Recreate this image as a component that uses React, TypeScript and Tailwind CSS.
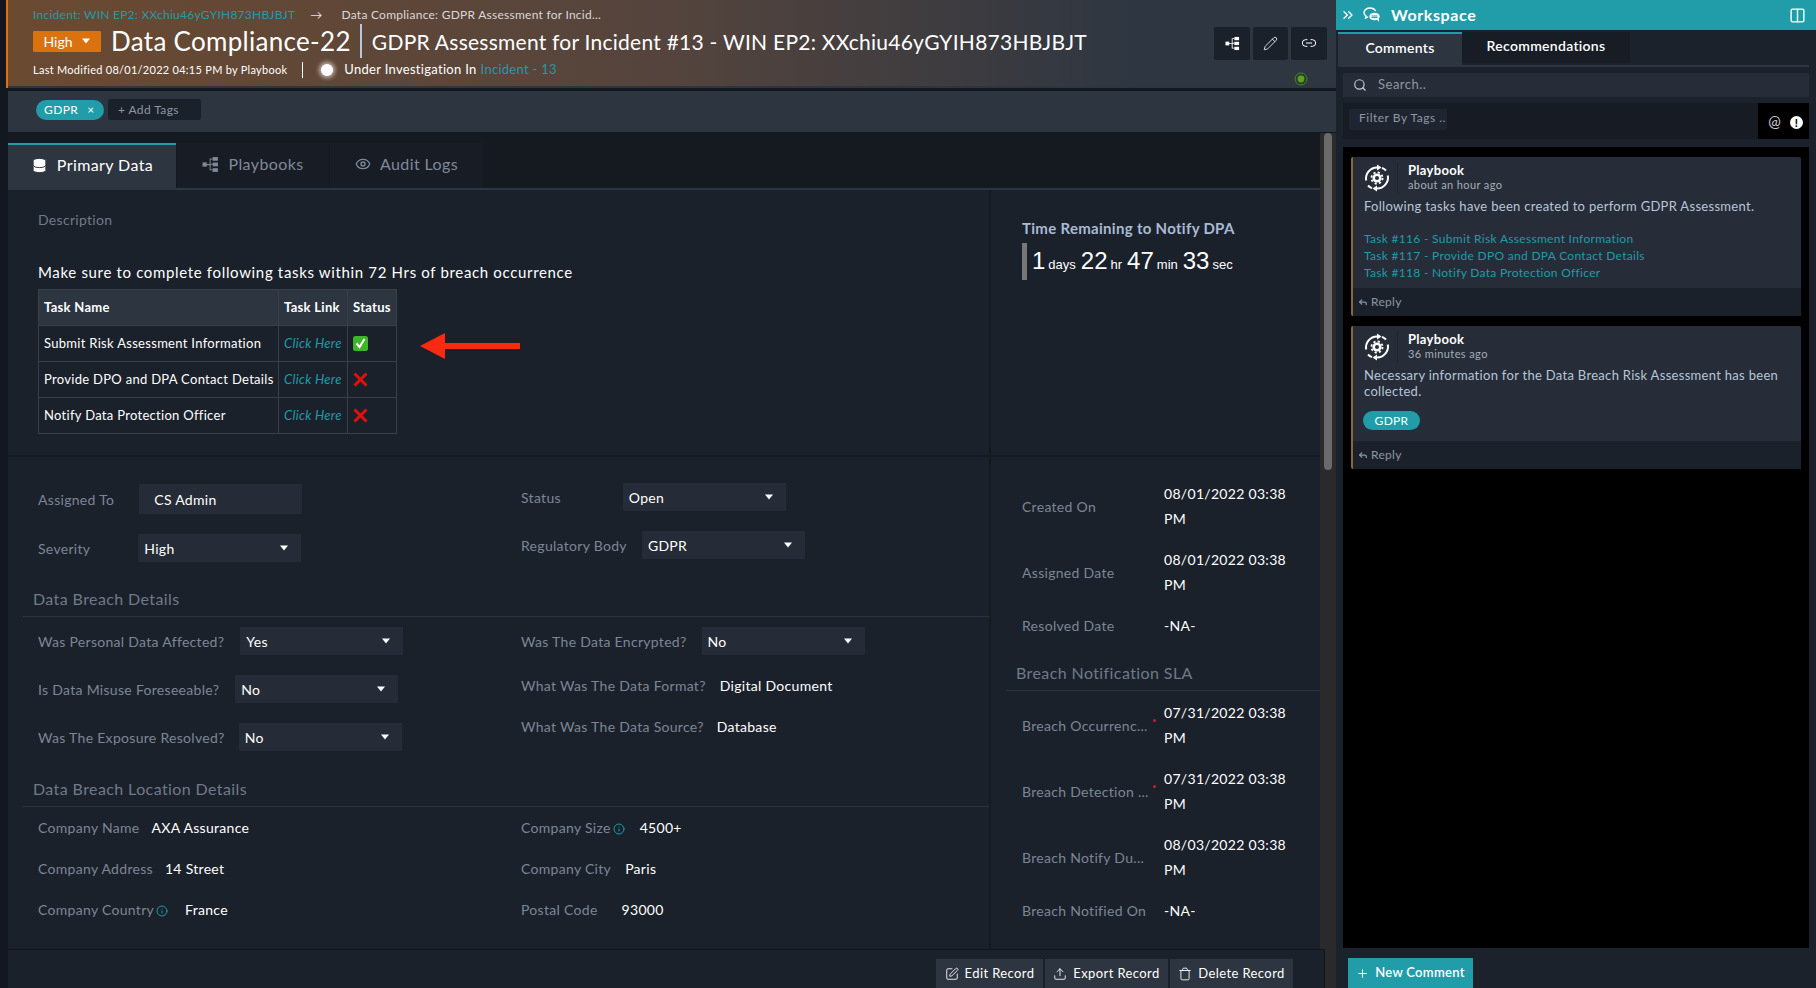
import React from 'react';
import { ChevronsRight, Columns2, Database, Eye, Info, Link2, Pencil, Plus, Reply, Search, SquarePen, Trash, Upload } from 'lucide-react';

function Caret() {
  return (
    <svg width="10" height="6" viewBox="0 0 10 6" className="shrink-0">
      <polygon points="1,0.5 9,0.5 5,5.5" fill="#ffffff" />
    </svg>
  );
}

function FlowIcon({ color = '#ffffff', size = 16 }: { color?: string; size?: number }) {
  return (
    <svg width={size} height={size} viewBox="0 0 16 16" fill={color}>
      <rect x="0.5" y="6" width="4" height="4" />
      <rect x="10" y="1" width="5" height="3.5" />
      <rect x="10" y="6.2" width="5" height="3.5" />
      <rect x="10" y="11.5" width="5" height="3.5" />
      <path d="M4 7.6h3.2V2.4H10v0.9H8.1v3.9H10v1H8.1v4.3H10v0.9H7.2V8.6H4z" />
    </svg>
  );
}

function PlaybookIcon() {
  return (
    <svg width="28" height="28" viewBox="0 0 28 28" fill="none" stroke="#ffffff" strokeWidth="2">
      <path d="M3.2 16.5a11 11 0 0 1 11-13" />
      <path d="M24.8 11.5a11 11 0 0 1-11 13" />
      <path d="M5 21.5a11 11 0 0 0 4 2.6" />
      <path d="M23 6.5a11 11 0 0 0-4-2.6" />
      <polygon points="14,0.5 18.5,3.5 14,6.5" fill="#ffffff" stroke="none" />
      <polygon points="14,21.5 9.5,24.5 14,27.5" fill="#ffffff" stroke="none" />
      <circle cx="14" cy="14" r="4.6" fill="#ffffff" stroke="none" />
      <circle cx="14" cy="14" r="5.6" strokeWidth="1.8" strokeDasharray="2.2 2.2" />
      <circle cx="14" cy="14" r="2" fill="#262d38" stroke="none" />
    </svg>
  );
}

function WorkspaceIcon() {
  return (
    <svg width="18" height="16" viewBox="0 0 18 16" fill="none" stroke="#ffffff" strokeWidth="1.4">
      <path d="M7 1C3.7 1 1 3 1 5.6c0 1.4.8 2.6 2 3.4L2.6 11l2.5-1.2" />
      <path d="M7 1c2.6 0 4.8 1.2 5.6 3" />
      <ellipse cx="11.5" cy="9.5" rx="5.2" ry="3.8" fill="#ffffff" stroke="none" />
      <path d="M8.5 9h6M8.5 10.6h6" stroke="#219ca9" strokeWidth="1" />
      <path d="M14 12.5l2 2.5v-3.5" fill="#ffffff" stroke="none" />
    </svg>
  );
}

function Select({ value, gap }: { value: string; gap: number }) {
  return (
    <div style={{ marginLeft: gap }} className="w-[163px] h-[28px] bg-[#262c37] flex items-center justify-between pl-[6px] pr-[12px] text-white">
      <span>{value}</span>
      <Caret />
    </div>
  );
}

function Label({ children }: { children: React.ReactNode }) {
  return <span className="text-[#7b8696] whitespace-nowrap">{children}</span>;
}

function FieldRow({ label, value, gap, height = 'h-[48px]' }: { label: string; value: string; gap: number; height?: string }) {
  return (
    <div className={`flex items-center ${height}`}>
      <Label>{label}</Label>
      <Select value={value} gap={gap} />
    </div>
  );
}

function TextRow({ label, value, gap, info, height }: { label: string; value: string; gap: number; info?: boolean; height: string }) {
  return (
    <div className={`flex items-center ${height}`}>
      <Label>{label}</Label>
      {info && <Info size={12} className="text-[#1f9ca8] ml-[2px] mt-[2px]" />}
      <span style={{ marginLeft: gap }} className="text-white whitespace-nowrap">{value}</span>
    </div>
  );
}

function DateRow({ label, value, required, height }: { label: string; value: string; required?: boolean; height: string }) {
  return (
    <div className={`flex items-center ${height}`}>
      <div className="w-[142px] relative">
        <Label>{label}</Label>
        {required && <span className="absolute left-[131px] top-[4px] w-[3px] h-[3px] rounded-full bg-[#d0192c]" />}
      </div>
      <span className="w-[130px] text-white leading-[25px]">{value}</span>
    </div>
  );
}

const tasks = [
  { name: 'Submit Risk Assessment Information', done: true },
  { name: 'Provide DPO and DPA Contact Details', done: false },
  { name: 'Notify Data Protection Officer', done: false },
];

function StatusMark({ done }: { done: boolean }) {
  if (done) {
    return (
      <svg width="15" height="15" viewBox="0 0 15 15">
        <rect width="15" height="15" rx="2.5" fill="#3fb62a" />
        <path d="M3.5 7.5l3 3.5 5-8" fill="none" stroke="#ffffff" strokeWidth="2" />
      </svg>
    );
  }
  return (
    <svg width="15" height="15" viewBox="0 0 15 15">
      <path d="M1.5 1.5l12 12M13.5 1.5l-12 12" stroke="#e01010" strokeWidth="3" />
    </svg>
  );
}

function TaskTable() {
  return (
    <table className="w-[358px] table-fixed border-collapse text-[13px] tracking-[0.3px] text-white">
      <colgroup>
        <col className="w-[240px]" />
        <col className="w-[69px]" />
        <col className="w-[49px]" />
      </colgroup>
      <thead>
        <tr className="h-[36px] bg-[#2d3540] font-bold">
          <th className="border border-[#3a3f47] pl-[5px] text-left font-bold">Task Name</th>
          <th className="border border-[#3a3f47] pl-[5px] text-left font-bold whitespace-nowrap">Task Link</th>
          <th className="border border-[#3a3f47] pl-[5px] text-left font-bold">Status</th>
        </tr>
      </thead>
      <tbody>
        {tasks.map((t) => (
          <tr key={t.name} className="h-[36px]">
            <td className="border border-[#3a3f47] pl-[5px] whitespace-nowrap">{t.name}</td>
            <td className="border border-[#3a3f47] pl-[5px] italic text-[#1f9ca8] whitespace-nowrap">Click Here</td>
            <td className="border border-[#3a3f47] pl-[5px]"><StatusMark done={t.done} /></td>
          </tr>
        ))}
      </tbody>
    </table>
  );
}

function Countdown() {
  const parts = [['1', 'days'], ['22', 'hr'], ['47', 'min'], ['33', 'sec']];
  return (
    <div className="mt-[5px] flex h-[37px] border-l-[5px] border-[#777777] pl-[5px] pb-[1px] items-center font-['Liberation_Sans',sans-serif] text-white tracking-normal">
      {parts.map(([n, u]) => (
        <span key={u} className="mr-[5px] flex items-baseline">
          <span className="text-[24px] leading-none">{n}</span>
          <span className="text-[13px] leading-none ml-[3px]">{u}</span>
        </span>
      ))}
    </div>
  );
}

function MainPanel() {
  return (
    <div className="h-[759px] flex overflow-hidden bg-[#1b212b] text-[14px] tracking-[0.3px]">
      <div className="w-[983px] shrink-0 border-r-[2px] border-[#151a21]">
        <div className="h-[267px] pl-[30px] pt-[22px] border-b-[2px] border-[#151a21]">
          <div className="text-[#6f7a8a] leading-[16px]">Description</div>
          <div className="mt-[34px] text-[15px] text-white leading-[20px] tracking-[0.66px] whitespace-nowrap">Make sure to complete following tasks within 72 Hrs of breach occurrence</div>
          <div className="mt-[7px] flex">
            <TaskTable />
            <svg width="100" height="26" viewBox="0 0 100 26" className="ml-[23px] mt-[44px]">
              <polygon points="0,13 25,0 25,10 100,10 100,16 25,16 25,26" fill="#f92a10" />
            </svg>
          </div>
        </div>
        <div className="flex h-[132px] pl-[30px] pt-[26px]">
          <div className="w-[483px]">
            <div className="flex items-center h-[32px]">
              <Label>Assigned To</Label>
              <div className="ml-[25px] w-[163px] h-[30px] bg-[#262c37] pl-[15px] flex items-center text-white">CS Admin</div>
            </div>
            <div className="flex items-center h-[28px] mt-[19px]">
              <Label>Severity</Label>
              <div className="ml-[48px]"><Select value="High" gap={0} /></div>
            </div>
          </div>
          <div>
            <FieldRow label="Status" value="Open" gap={62} height="h-[28px]" />
            <div className="mt-[20px]"><FieldRow label="Regulatory Body" value="GDPR" gap={15} height="h-[28px]" /></div>
          </div>
        </div>
        <div className="ml-[15px] pl-[10px] h-[28px] text-[16px] text-[#6f7a8a] tracking-[0.4px] leading-[20px] border-b border-[#2b3340]">Data Breach Details</div>
        <div className="flex h-[155px] pl-[30px]">
          <div className="w-[483px]">
            <FieldRow label="Was Personal Data Affected?" value="Yes" gap={16} />
            <FieldRow label="Is Data Misuse Foreseeable?" value="No" gap={16} />
            <FieldRow label="Was The Exposure Resolved?" value="No" gap={14} />
          </div>
          <div>
            <FieldRow label="Was The Data Encrypted?" value="No" gap={15} />
            <TextRow label="What Was The Data Format?" value="Digital Document" gap={14} height="h-[40px]" />
            <TextRow label="What Was The Data Source?" value="Database" gap={13} height="h-[42px]" />
          </div>
        </div>
        <div className="ml-[15px] mt-[7px] pl-[10px] h-[28px] text-[16px] text-[#6f7a8a] tracking-[0.4px] leading-[20px] border-b border-[#2b3340]">Data Breach Location Details</div>
        <div className="flex pl-[30px]">
          <div className="w-[483px]">
            <TextRow label="Company Name" value="AXA Assurance" gap={12} height="h-[41px]" />
            <TextRow label="Company Address" value="14 Street" gap={12} height="h-[41px]" />
            <TextRow label="Company Country" value="France" gap={17} info height="h-[41px]" />
          </div>
          <div>
            <TextRow label="Company Size" value="4500+" gap={15} info height="h-[41px]" />
            <TextRow label="Company City" value="Paris" gap={14} height="h-[41px]" />
            <TextRow label="Postal Code" value="93000" gap={24} height="h-[41px]" />
          </div>
        </div>
      </div>
      <div className="flex-1 min-w-0">
        <div className="h-[267px] pl-[31px] pt-[28px] border-b-[2px] border-[#151a21]">
          <div className="text-[15px] font-bold text-[#a9bad3] leading-[20px] whitespace-nowrap">Time Remaining to Notify DPA</div>
          <Countdown />
        </div>
        <div className="pl-[31px] pt-[16px]">
          <DateRow label="Created On" value="08/01/2022 03:38 PM" height="h-[66px]" />
          <DateRow label="Assigned Date" value="08/01/2022 03:38 PM" height="h-[66px]" />
          <DateRow label="Resolved Date" value="-NA-" height="h-[40px]" />
        </div>
        <div className="ml-[15px] mt-[18px] pl-[10px] h-[28px] text-[16px] text-[#6f7a8a] tracking-[0.4px] leading-[20px] border-b border-[#2b3340]">Breach Notification SLA</div>
        <div className="pl-[31px] pt-[1px]">
          <DateRow label="Breach Occurrenc..." value="07/31/2022 03:38 PM" required height="h-[66px]" />
          <DateRow label="Breach Detection ..." value="07/31/2022 03:38 PM" required height="h-[66px]" />
          <DateRow label="Breach Notify Du..." value="08/03/2022 03:38 PM" height="h-[66px]" />
          <DateRow label="Breach Notified On" value="-NA-" height="h-[40px]" />
        </div>
      </div>
    </div>
  );
}

function FooterButton({ icon, label, width }: { icon: React.ReactNode; label: string; width: string }) {
  return (
    <div className={`${width} h-[29px] bg-[#2d3540] text-white flex items-center justify-center gap-[6px] text-[13px] tracking-[0.4px]`}>
      {icon}
      <span>{label}</span>
    </div>
  );
}

function TabItem({ icon, label, width, active }: { icon: React.ReactNode; label: string; width: string; active?: boolean }) {
  return (
    <div className={`${width} pb-[3px] flex items-center justify-center gap-[9px] text-[16px] tracking-[0.4px] ${active ? 'bg-[#2d3540] border-t-[2px] border-[#1f9ca8] text-white' : 'bg-[#171c25] text-[#7f8998]'}`}>
      {icon}
      <span>{label}</span>
    </div>
  );
}

function Comment({ time, height, children }: { time: string; height: string; children: React.ReactNode }) {
  return (
    <div className={`${height} flex flex-col mx-[8px] border-l-[2px] border-[#8a6a2a] bg-[#262d38] rounded-[2px]`}>
      <div className="flex-1 min-h-0 px-[11px] pt-[5px]">
        <div className="flex">
          <div className="w-[35px] h-[32px] flex items-center -ml-[1px] border-r border-[#1f252f]"><PlaybookIcon /></div>
          <div className="ml-[10px]">
            <div className="text-[13px] font-bold text-white leading-[16px]">Playbook</div>
            <div className="text-[11px] text-[#a5acb8] leading-[15px] -mt-[1px] tracking-[0.4px]">{time}</div>
          </div>
        </div>
        {children}
      </div>
      <div className="h-[28px] bg-[#1b212b] flex items-center gap-[3px] pl-[5px] text-[12px] text-[#8d96a3] shrink-0">
        <Reply size={10} strokeWidth={3} />
        <span>Reply</span>
      </div>
    </div>
  );
}

function Workspace() {
  return (
    <div className="w-[480px] shrink-0 h-full flex flex-col bg-[#1c222c]">
      <div className="h-[30px] bg-[#219ca9] flex items-center text-white shrink-0">
        <ChevronsRight size={16} className="ml-[4px]" />
        <div className="ml-[7px]"><WorkspaceIcon /></div>
        <span className="ml-[10px] text-[16px] font-bold tracking-[0.6px]">Workspace</span>
        <Columns2 size={17} className="ml-auto mr-[10px]" />
      </div>
      <div className="flex h-[37px] mx-[2px] mr-[7px] border-b-[2px] border-[#2d3540] pt-[2px] text-[14px] text-white font-semibold tracking-[0.3px] shrink-0">
        <div className="w-[124px] h-[33px] pb-[4px] bg-[#2d3540] border-t-[2px] border-[#1f9ca8] flex items-center justify-center">Comments</div>
        <div className="w-[168px] h-[31px] pb-[5px] bg-[#171c25] flex items-center justify-center">Recommendations</div>
      </div>
      <div className="mx-[7px] mt-[6px] h-[24px] bg-[#262d38] flex items-center pl-[10px] text-[13px] text-[#8f97a3] tracking-[0.5px]">
        <Search size={14} className="text-[#c8ccd2]" />
        <span className="ml-[11px]">Search..</span>
      </div>
      <div className="mx-[7px] mt-[6px] h-[36px] bg-[#171c24] flex justify-between">
        <div className="mt-[6px] ml-[6px] w-[98px] h-[21px] pb-[3px] rounded-[2px] bg-[#1f2530] flex items-center pl-[10px] text-[12px] text-[#8f97a3] tracking-[0.5px]">Filter By Tags ..</div>
        <div className="w-[51px] bg-black flex items-center justify-center gap-[9px] pl-[4px] text-[#c8ccd2] text-[15px]">
          <span className="leading-none">@</span>
          <span className="w-[13px] h-[13px] mt-[2px] rounded-full bg-white flex items-center justify-center text-black text-[11px] font-black leading-none">!</span>
        </div>
      </div>
      <div className="mx-[7px] mt-[8px] h-[801px] bg-black pt-[10px] flex flex-col gap-[10px] text-[13px] tracking-[0.3px]">
        <Comment time="about an hour ago" height="h-[159px]">
          <div className="mt-[4px] text-[#b8c5d8] leading-[16px] whitespace-nowrap">Following tasks have been created to perform GDPR Assessment.</div>
          <div className="mt-[17px] text-[12px] text-[#1f9ca8] leading-[16.8px]">
            <div>Task #116 - Submit Risk Assessment Information</div>
            <div>Task #117 - Provide DPO and DPA Contact Details</div>
            <div>Task #118 - Notify Data Protection Officer</div>
          </div>
        </Comment>
        <Comment time="36 minutes ago" height="h-[143px]">
          <div className="mt-[4px] text-[#b8c5d8] leading-[16px]">Necessary information for the Data Breach Risk Assessment has been collected.</div>
          <div className="mt-[12px] -ml-[1px] w-[57px] h-[19px] rounded-full bg-[#219ca9] text-white text-[12px] flex items-center justify-center">GDPR</div>
        </Comment>
      </div>
      <div className="mt-[10px] ml-[12px] w-[125px] h-[30px] bg-[#219ca9] text-white text-[13px] font-semibold tracking-[0.3px] flex items-center justify-center gap-[6px]">
        <Plus size={13} />
        <span>New Comment</span>
      </div>
    </div>
  );
}

export default function App() {
  return (
    <div className="w-[1816px] h-[988px] flex overflow-hidden bg-[#13171f] font-['Lato',sans-serif]">
      <div className="w-[1336px] shrink-0 h-full flex flex-col">
        <div className="ml-[6px] h-[88px] shrink-0 border-l-[2px] border-[#d9720f] bg-[#2d3540]">
          <div className="h-[86px] pl-[25px] pr-[9px] bg-[linear-gradient(90deg,#6b4a31_0%,#54443d_50%,#2e3641_85%)] text-white">
            <div className="pt-[8px] flex items-center h-[22px] text-[12px] tracking-[0.25px] whitespace-nowrap">
              <span className="text-[#1f9ca8]">Incident: WIN EP2: XXchiu46yGYIH873HBJBJT</span>
              <span className="ml-[15px] text-[#e6e6e6]">→</span>
              <span className="ml-[19px] text-[#d8d8d8]">Data Compliance: GDPR Assessment for Incid...</span>
            </div>
            <div className="flex items-center h-[38px]">
              <div className="w-[68px] h-[21px] bg-[#d9720f] rounded-[1px] flex items-center justify-center gap-[8px] text-[14px]">
                <span>High</span>
                <Caret />
              </div>
              <span className="ml-[10px] text-[26px] leading-none tracking-[0.3px] whitespace-nowrap">Data Compliance-22</span>
              <span className="ml-[9px] w-[2px] h-[34px] bg-[#b8c7da]" />
              <span className="ml-[10px] text-[21px] leading-none tracking-[0.25px] whitespace-nowrap">GDPR Assessment for Incident #13 - WIN EP2: XXchiu46yGYIH873HBJBJT</span>
              <div className="ml-auto flex gap-[3px] mt-[4px]">
                <div className="w-[36px] h-[33px] bg-[#1b212b] rounded-[2px] flex items-center justify-center"><FlowIcon size={15} /></div>
                <div className="w-[35px] h-[33px] bg-[#1b212b] rounded-[2px] flex items-center justify-center"><Pencil size={15} strokeWidth={1.3} /></div>
                <div className="w-[36px] h-[33px] bg-[#1b212b] rounded-[2px] flex items-center justify-center"><Link2 size={16} strokeWidth={1.5} /></div>
              </div>
            </div>
            <div className="flex items-center h-[20px] text-[11px] tracking-[0.27px] whitespace-nowrap">
              <span>Last Modified 08/01/2022 04:15 PM by Playbook</span>
              <span className="ml-[15px] w-[1px] h-[16px] bg-white" />
              <span className="ml-[18px] w-[12px] h-[12px] rounded-full bg-white shadow-[0_0_4px_2px_rgba(255,255,255,0.6)]" />
              <span className="ml-[11px] text-[13px] tracking-[0.3px]">Under Investigation In</span>
              <span className="ml-[4px] text-[13px] text-[#1f9ca8]">Incident - 13</span>
              <svg width="14" height="14" viewBox="0 0 14 14" className="ml-auto mr-[19px] relative top-[9px]">
                <circle cx="7" cy="7" r="6" fill="none" stroke="#3f8a12" strokeWidth="1" />
                <circle cx="7" cy="7" r="3.4" fill="#54a80e" />
              </svg>
            </div>
          </div>
        </div>
        <div className="h-[3px] shrink-0" />
        <div className="ml-[8px] h-[41px] shrink-0 bg-[#2d3540] flex items-center pl-[28px] pb-[4px] text-[12px]">
          <div className="w-[68px] h-[20px] rounded-full bg-[#219ca9] text-white flex items-center pl-[8px] tracking-[0.4px]">
            <span>GDPR</span>
            <span className="ml-[9px] text-[12px]">×</span>
          </div>
          <div className="ml-[4px] w-[93px] h-[21px] bg-[#1b212b] rounded-[2px] flex items-center pl-[10px] text-[#8f97a3] tracking-[0.4px]">+ Add Tags</div>
        </div>
        <div className="flex-1 min-h-0 flex ml-[8px] mt-[1px]">
          <div className="w-[1312px] shrink-0 flex flex-col">
            <div className="h-[57px] shrink-0 bg-[#151a21] border-b-[2px] border-[#2d3540] pt-[10px] flex gap-[1px]">
              <TabItem active width="w-[168px]" label="Primary Data" icon={<Database size={17} fill="currentColor" stroke="#2d3540" strokeWidth={1.4} />} />
              <TabItem width="w-[152px]" label="Playbooks" icon={<FlowIcon size={17} color="#7f8998" />} />
              <TabItem width="w-[153px]" label="Audit Logs" icon={<Eye size={16} />} />
            </div>
            <MainPanel />
            <div className="relative z-10 h-[39px] -mr-[5px] shrink-0 bg-[#1b212b] border-t border-r border-[#12161c] flex justify-end items-end pr-[31px] gap-[2px]">
              <FooterButton width="w-[107px]" label="Edit Record" icon={<SquarePen size={14} strokeWidth={1.5} />} />
              <FooterButton width="w-[123px]" label="Export Record" icon={<Upload size={14} strokeWidth={1.5} />} />
              <FooterButton width="w-[123px]" label="Delete Record" icon={<Trash size={14} strokeWidth={1.5} />} />
            </div>
          </div>
          <div className="flex-1 bg-[#2a2a2a] pl-[4px]">
            <div className="w-[8px] h-[337px] rounded-full bg-[#6a6a6a]" />
          </div>
        </div>
      </div>
      <Workspace />
    </div>
  );
}
